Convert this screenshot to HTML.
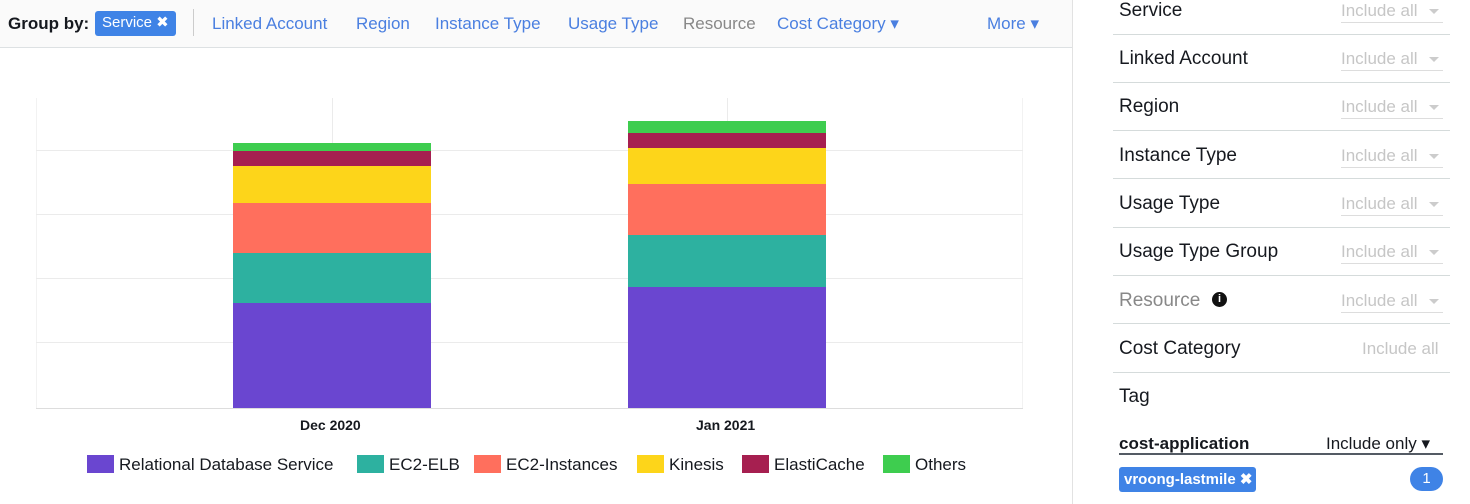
<!DOCTYPE html>
<html><head><style>
body{margin:0;width:1470px;height:504px;position:relative;overflow:hidden;font-family:"Liberation Sans",sans-serif;background:#fff}
.a{position:absolute}
.top{left:0;top:0;width:1072px;height:47px;background:#fafafa;border-bottom:1px solid #dde1e3}
.nav{top:14px;font-size:17px;color:#4a7fe0}
.lbl{left:1119px;font-size:19px;color:#16191f}
.sep{left:1113px;width:337px;height:1px;background:#d5dbdb}
.inc{left:1341px;width:102px;font-size:17px;color:#c6c6c6;border-bottom:1px solid #ddd;padding-bottom:1px}
.inc:after{content:"";position:absolute;right:4px;top:8px;border:5px solid transparent;border-top:5px solid #ccc}
.leg{top:455px;font-size:17px;color:#16191f}
.sw{display:inline-block;width:27px;height:18px;vertical-align:-3px;margin-right:5px}
.g{background:#ebebeb}
</style></head><body>
<div class="a top"></div>
<div class="a" style="left:8px;top:14px;font-size:17px;font-weight:bold;color:#16191f">Group by:</div>
<div class="a" style="left:95px;top:11px;width:81px;height:25px;background:#3f83e6;border-radius:3px;color:#fff;font-size:15px;line-height:24px;padding-left:7px;box-sizing:border-box">Service ✖</div>
<div class="a" style="left:193px;top:9px;width:1px;height:27px;background:#ccc"></div>
<div class="a nav" style="left:212px">Linked Account</div>
<div class="a nav" style="left:356px">Region</div>
<div class="a nav" style="left:435px">Instance Type</div>
<div class="a nav" style="left:568px">Usage Type</div>
<div class="a nav" style="left:683px;color:#888">Resource</div>
<div class="a nav" style="left:777px">Cost Category ▾</div>
<div class="a nav" style="left:987px">More ▾</div>
<div class="a" style="left:1072px;top:0;width:1px;height:504px;background:#e2e2e2"></div>
<div class="a g" style="left:36px;top:98px;width:1px;height:311px;background:#f2f2f2"></div>
<div class="a g" style="left:1022px;top:98px;width:1px;height:311px;background:#f2f2f2"></div>
<div class="a g" style="left:332px;top:98px;width:1px;height:311px"></div>
<div class="a g" style="left:727px;top:98px;width:1px;height:311px"></div>
<div class="a g" style="left:36px;top:150px;width:987px;height:1px"></div>
<div class="a g" style="left:36px;top:214px;width:987px;height:1px"></div>
<div class="a g" style="left:36px;top:278px;width:987px;height:1px"></div>
<div class="a g" style="left:36px;top:342px;width:987px;height:1px"></div>
<div class="a g" style="left:36px;top:408px;width:987px;height:1px;background:#ddd"></div>
<div class="a" style="left:233px;top:143px;width:198px;height:8px;background:#3ecd4f"></div>
<div class="a" style="left:233px;top:151px;width:198px;height:15px;background:#a61f50"></div>
<div class="a" style="left:233px;top:166px;width:198px;height:37px;background:#fdd51a"></div>
<div class="a" style="left:233px;top:203px;width:198px;height:50px;background:#ff6f5d"></div>
<div class="a" style="left:233px;top:253px;width:198px;height:50px;background:#2db1a0"></div>
<div class="a" style="left:233px;top:303px;width:198px;height:105px;background:#6a46d0"></div>
<div class="a" style="left:628px;top:121px;width:198px;height:12px;background:#3ecd4f"></div>
<div class="a" style="left:628px;top:133px;width:198px;height:15px;background:#a61f50"></div>
<div class="a" style="left:628px;top:148px;width:198px;height:36px;background:#fdd51a"></div>
<div class="a" style="left:628px;top:184px;width:198px;height:51px;background:#ff6f5d"></div>
<div class="a" style="left:628px;top:235px;width:198px;height:52px;background:#2db1a0"></div>
<div class="a" style="left:628px;top:287px;width:198px;height:121px;background:#6a46d0"></div>
<div class="a" style="left:300px;top:417px;font-size:14px;font-weight:600;color:#16191f">Dec 2020</div>
<div class="a" style="left:696px;top:417px;font-size:14px;font-weight:600;color:#16191f">Jan 2021</div>
<div class="a leg" style="left:87px"><span class="sw" style="background:#6a46d0"></span>Relational Database Service</div>
<div class="a leg" style="left:357px"><span class="sw" style="background:#2db1a0"></span>EC2-ELB</div>
<div class="a leg" style="left:474px"><span class="sw" style="background:#ff6f5d"></span>EC2-Instances</div>
<div class="a leg" style="left:637px"><span class="sw" style="background:#fdd51a"></span>Kinesis</div>
<div class="a leg" style="left:742px"><span class="sw" style="background:#a61f50"></span>ElastiCache</div>
<div class="a leg" style="left:883px"><span class="sw" style="background:#3ecd4f"></span>Others</div>
<div class="a lbl" style="top:0px">Service</div><div class="a inc" style="top:1px">Include all</div>
<div class="a sep" style="top:34px"></div>
<div class="a lbl" style="top:48px">Linked Account</div><div class="a inc" style="top:49px">Include all</div>
<div class="a sep" style="top:82px"></div>
<div class="a lbl" style="top:96px">Region</div><div class="a inc" style="top:97px">Include all</div>
<div class="a sep" style="top:130px"></div>
<div class="a lbl" style="top:145px">Instance Type</div><div class="a inc" style="top:146px">Include all</div>
<div class="a sep" style="top:178px"></div>
<div class="a lbl" style="top:193px">Usage Type</div><div class="a inc" style="top:194px">Include all</div>
<div class="a sep" style="top:227px"></div>
<div class="a lbl" style="top:241px">Usage Type Group</div><div class="a inc" style="top:242px">Include all</div>
<div class="a sep" style="top:275px"></div>
<div class="a lbl" style="top:290px;color:#888">Resource</div>
<div class="a" style="left:1212px;top:292px;width:15px;height:15px;border-radius:50%;background:#111;color:#fff;font-size:11px;font-weight:bold;text-align:center;line-height:15px">i</div>
<div class="a inc" style="top:291px">Include all</div>
<div class="a sep" style="top:323px"></div>
<div class="a lbl" style="top:338px">Cost Category</div>
<div class="a" style="left:1362px;top:339px;font-size:17px;color:#c6c6c6">Include all</div>
<div class="a sep" style="top:372px"></div>
<div class="a lbl" style="top:386px">Tag</div>
<div class="a" style="left:1119px;top:433px;width:324px;height:20px;border-bottom:2px solid #545b64"></div>
<div class="a" style="left:1119px;top:434px;font-size:17px;font-weight:bold;color:#16191f">cost-application</div>
<div class="a" style="left:1326px;top:434px;font-size:17px;color:#16191f">Include only ▾</div>
<div class="a" style="left:1119px;top:467px;width:137px;height:25px;background:#3f83e6;border-radius:3px;color:#fff;font-size:15px;font-weight:600;line-height:25px;padding-left:5px;box-sizing:border-box">vroong-lastmile ✖</div>
<div class="a" style="left:1410px;top:467px;width:33px;height:24px;background:#3f83e6;border-radius:12px;color:#fff;font-size:15px;line-height:24px;text-align:center">1</div>
</body></html>
